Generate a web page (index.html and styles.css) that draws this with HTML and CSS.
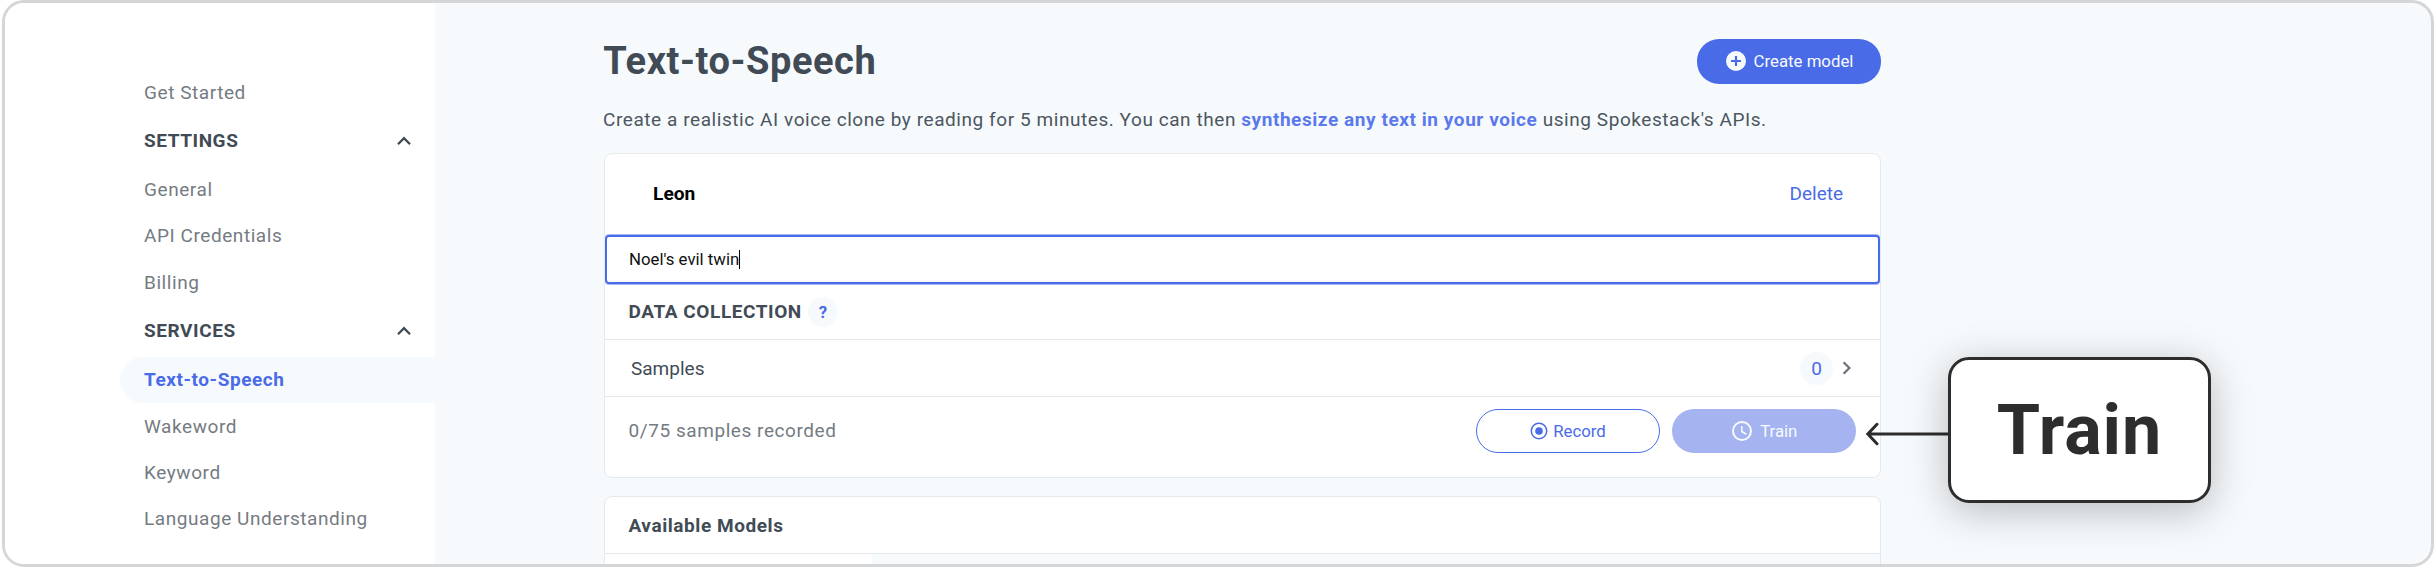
FILE: index.html
```
<!DOCTYPE html>
<html lang="en">
<head>
<meta charset="utf-8">
<title>Text-to-Speech</title>
<link rel="stylesheet" href="styles.css">
</head>
<body>
<div class="frame">
  <nav class="sidebar">
    <a class="nav-item">Get Started</a>
    <div class="nav-heading">SETTINGS
      <svg class="caret" width="16" height="10" viewBox="0 0 16 10"><path d="M2 8.2 8 2.2l6 6"/></svg>
    </div>
    <a class="nav-item">General</a>
    <a class="nav-item">API Credentials</a>
    <a class="nav-item">Billing</a>
    <div class="nav-heading">SERVICES
      <svg class="caret" width="16" height="10" viewBox="0 0 16 10"><path d="M2 8.2 8 2.2l6 6"/></svg>
    </div>
    <a class="nav-item active">Text-to-Speech</a>
    <a class="nav-item">Wakeword</a>
    <a class="nav-item">Keyword</a>
    <a class="nav-item">Language Understanding</a>
  </nav>
  <main class="main">
    <header class="header">
      <h1 class="title">Text-to-Speech</h1>
      <button class="button primary create">
        <svg width="20" height="20" viewBox="0 0 20 20"><circle cx="10" cy="10" r="10" fill="#f6fafd"/><path d="M10 5v10M5 10h10" stroke="#4a6be8" stroke-width="2.2"/></svg>
        <span>Create model</span>
      </button>
    </header>
    <p class="intro">Create a realistic AI voice clone by reading for 5 minutes. You can then <a class="link">synthesize any text in your voice</a> using Spokestack's APIs.</p>
    <section class="card">
      <div class="voice"><strong>Leon</strong><a class="delete">Delete</a></div>
      <div class="name-input">Noel's evil twin<span class="cursor"></span></div>
      <div class="row collection"><h2 class="subtitle">DATA COLLECTION</h2><span class="help">?</span></div>
      <div class="row samples">
        <span>Samples</span>
        <span class="count">0</span>
        <svg class="chevron" width="10" height="16" viewBox="0 0 10 16"><path d="M1.6 2.2 7.4 8l-5.800 5.800"/></svg>
      </div>
      <div class="actions">
        <span class="progress">0/75 samples recorded</span>
        <button class="button outline">
          <svg width="18" height="18" viewBox="0 0 18 18"><circle cx="9" cy="9" r="7.700" fill="none" stroke="#4a6be8" stroke-width="1.500"/><circle cx="9" cy="9" r="3.800" fill="#4a6be8"/></svg>
          <span>Record</span>
        </button>
        <button class="button disabled">
          <svg width="20" height="20" viewBox="0 0 20 20" fill="none" stroke="#f6fafd"><circle cx="10" cy="10" r="9" stroke-width="2"/><path d="M9.800 5v5.500l4.500 2.700" stroke-width="1.600"/></svg>
          <span>Train</span>
        </button>
      </div>
    </section>
    <section class="card models">
      <h2 class="row subtitle">Available Models</h2>
      <div class="models-body"><div class="models-list"></div></div>
    </section>
  </main>
  <div class="callout">
    <svg class="arrow" width="84" height="26" viewBox="0 0 84 26"><path d="M84 13H3M12 3.300 2.800 13l9.200 9.700"/></svg>
    <div class="callout-box">Train</div>
  </div>
</div>
</body>
</html>
```
FILE: styles.css
```
* { box-sizing: border-box; }
body {
  margin: 0;
  padding-left: 2px;
  background: #fff;
  font: 19px Roboto, sans-serif;
  letter-spacing: .565px;
  color: #414b55;
}
.frame {
  position: relative;
  display: flex;
  height: 567px;
  overflow: hidden;
  border: 3px solid #d4d6d8;
  border-radius: 22px;
  background: #f6fafd;
}
.sidebar {
  flex: none;
  width: 430px;
  padding: 66px 0 0 115px;
  background: #fff;
}
.nav-item, .nav-heading {
  display: flex;
  align-items: center;
  height: 46.3px;
  padding-left: 24px;
  color: #757b82;
}
.nav-heading {
  height: 51.2px;
  padding-right: 23px;
  justify-content: space-between;
  font-weight: 700;
  color: #414b55;
}
.nav-item.active {
  border-radius: 23px 0 0 23px;
  background: #f6fafd;
  color: #4a6be8;
  font-weight: 700;
}
.caret, .chevron, .arrow { fill: none; stroke: #414b55; stroke-width: 2.3; }
.main {
  flex: none;
  width: 1277px;
  margin-left: 169px;
  padding-top: 36px;
}
.header {
  display: flex;
  justify-content: space-between;
  height: 45px;
}
.title {
  margin: 0 0 0 -.8px;
  font-size: 38px;
  line-height: 44px;
  font-weight: 700;
}
.button {
  display: flex;
  align-items: center;
  justify-content: center;
  width: 184px;
  height: 44px;
  padding: 0;
  border: 0;
  border-radius: 22px;
  font: 16.8px Roboto, sans-serif;
  letter-spacing: 0;
}
.primary { background: #4a6be8; color: #f6fafd; gap: 8px; height: 45px; padding: 0 0 1px 1px; }
.outline { border: 1.5px solid #4a6be8; background: #fff; color: #4a6be8; gap: 5px; }
.disabled { margin-left: 12px; background: #a5b4f1; color: #f6fafd; gap: 8.5px; padding-left: 1px; }
.intro {
  margin: 22px 0 19px -1px;
  line-height: 28px;
  color: #4c5660;
}
.link { color: #5b79ec; font-weight: 700; }
.card {
  border: 1px solid #e6eaed;
  border-radius: 8px;
  background: #fff;
}
.voice {
  display: flex;
  align-items: center;
  justify-content: space-between;
  height: 81px;
  padding: 0 37px 2px 48px;
  letter-spacing: 0;
}
.voice strong { font-size: 19.200px; color: #000; }
.delete { font-size: 19px; color: #4a6be8; }
.name-input {
  display: flex;
  align-items: center;
  height: 49px;
  padding: 0 0 1px 22px;
  border: 2px solid #4a6be8;
  border-radius: 4px;
  box-shadow: 0 1px #a8b8f4, 0 -1px #a8b8f4;
  font-size: 16.8px;
  letter-spacing: 0;
  color: #111;
}
.cursor { width: 1px; height: 19px; background: #000; }
.row {
  display: flex;
  align-items: center;
  height: 56px;
  padding: 0 23.5px;
  border-bottom: 1px solid #e6eaed;
}
.subtitle { margin: 0; font-size: 19px; font-weight: 700; }
.collection { gap: 6px; }
.help {
  width: 30px;
  border-radius: 50%;
  background: #f6fafd;
  color: #4a6be8;
  font-size: 16.800px;
  line-height: 30px;
  font-weight: 700;
  text-align: center;
  letter-spacing: 0;
}
.samples { height: 57px; padding: 0 28px 0 26px; letter-spacing: 0; }
.count {
  width: 33px;
  margin-left: auto;
  border-radius: 50%;
  background: #f6fafd;
  color: #4a6be8;
  line-height: 33px;
  text-align: center;
}
.chevron { margin-left: 9px; stroke: #6d747b; }
.actions {
  display: flex;
  height: 80px;
  padding: 12px 24px 0 23.5px;
}
.progress { margin-right: auto; line-height: 44px; color: #757b82; }
.models { height: 90px; margin-top: 18px; }
.models .row { height: 57px; }
.models-body { height: 31px; background: #f6fafd; }
.models-list { width: 267px; height: 100%; background: #fff; }
.callout {
  position: absolute;
  left: 1860px;
  top: 354px;
  display: flex;
}
.arrow { margin: 63.500px -1px 0 0; stroke: #2d2d2d; stroke-width: 3; stroke-linecap: round; }
.callout-box {
  width: 263px;
  height: 146px;
  border: 3px solid #2d2d2d;
  border-radius: 21px;
  background: #fff;
  box-shadow: 0 8px 40px rgba(0, 0, 0, .25);
  color: #2d2d2d;
  font-size: 70px;
  font-weight: 700;
  line-height: 140px;
  text-align: center;
  letter-spacing: .9px;
}
```
